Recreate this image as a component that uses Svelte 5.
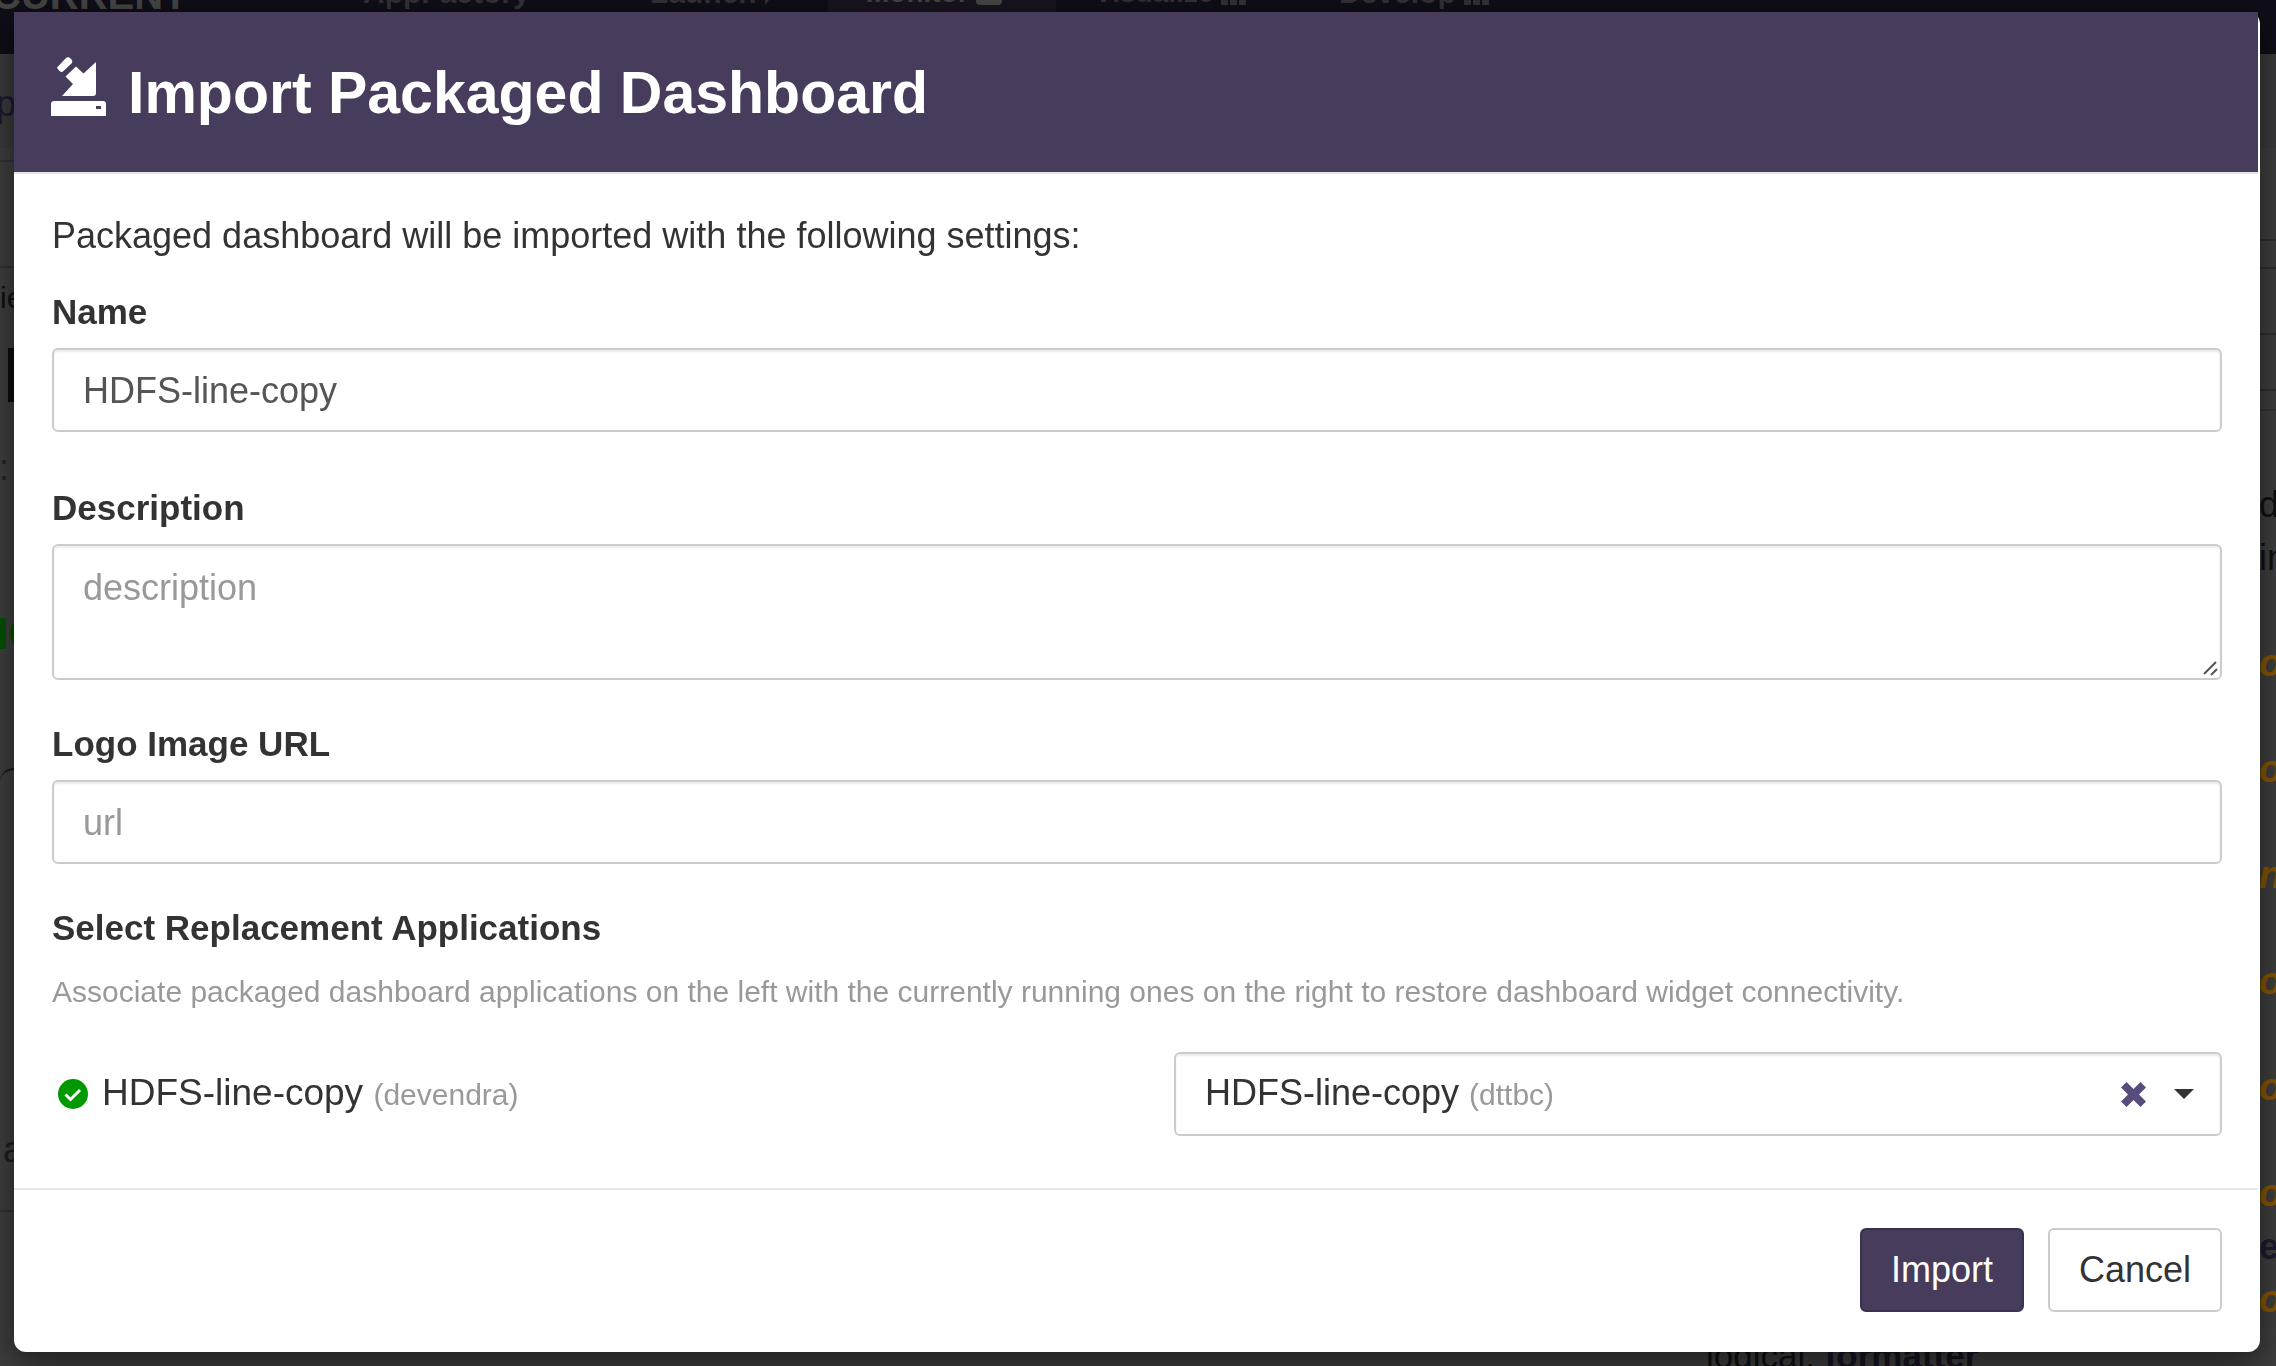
<script>
  let name = $state('HDFS-line-copy');
  let description = $state('');
  let logoUrl = $state('');

  const running = [{ id: 'dttbc', name: 'HDFS-line-copy' }];
  let replacementId = $state('dttbc');
  let replacement = $derived(running.find((app) => app.id === replacementId));

  const rightLines = [
    { text: 'd' },
    { text: 'in' },
    { text: '' },
    { text: 'o', kind: 'key' },
    { text: '' },
    { text: 'o', kind: 'key' },
    { text: '' },
    { text: 'n', kind: 'key' },
    { text: '' },
    { text: 'o', kind: 'key' },
    { text: '' },
    { text: 'o', kind: 'key' },
    { text: '' },
    { text: 'o', kind: 'key' },
    { text: 'e', kind: 'type' },
    { text: 'o', kind: 'key' }
  ];
</script>

<div class="page" aria-hidden="true">
  <div class="nav">
    <span class="brand">CURRENT</span>
    <span class="tab app">AppFactory</span>
    <span class="tab launch">Launch <svg width="10" height="24" viewBox="0 0 10 24"><path d="M0 0v24L10 12z" /></svg></span>
    <span class="tab active">Monitor <svg width="26" height="24" viewBox="0 0 26 24"><path d="M0 0h26v20a4 4 0 0 1-4 4H4a4 4 0 0 1-4-4z" /></svg></span>
    <span class="tab visualize">Visualize <svg width="25" height="24" viewBox="0 0 25 24"><path d="M0 0h7v24H0zM9 0h7v24H9zM18 0h7v24h-7z" /></svg></span>
    <span class="tab develop">Develop <svg width="25" height="24" viewBox="0 0 25 24"><path d="M0 0h7v24H0zM9 0h7v24H9zM18 0h7v24h-7z" /></svg></span>
  </div>
  <div class="subbar"><span>p</span></div>
  <div class="content">
    <div class="left">
      <div class="rule first"></div>
      <div class="rule second"></div>
      <span class="crumb">ie</span>
      <span class="block"></span>
      <span class="colon">:</span>
      <span class="status">IC</span>
      <span class="panel"></span>
      <span class="foot">a</span>
      <div class="rule"></div>
    </div>
    <div class="right">
      <div class="grid-rules"></div>
      {#each rightLines as line}
        <div class="line {line.kind ?? ''}">{line.text}</div>
      {/each}
    </div>
  </div>
  <div class="tail">logical, <b>formatter</b></div>
</div>

<div class="backdrop">
  <div class="dialog" role="dialog" aria-modal="true" aria-labelledby="title">
    <header>
      <svg class="import-icon" viewBox="0 0 55 59" aria-hidden="true">
        <path d="M7 9.500 14.500 1.500Q17 -.8 19.500 1.500L20.500 2.500Q22 4.500 20.500 6.500L12.500 14Q10.500 16 8.500 14L6.500 11.500Q5.500 10.500 7 9.500z" />
        <path d="M14.500 19.500 25 9.500 32.500 16.500 45 5V36a3 3 0 0 1-3 3H11L22 27z" />
        <path fill-rule="evenodd" d="M3 44H52a3 3 0 0 1 3 3V59H0V47a3 3 0 0 1 3-3zM45 49v3h5v-3z" />
      </svg>
      <h1 id="title">Import Packaged Dashboard</h1>
    </header>

    <form id="import-form" onsubmit={(e) => e.preventDefault()}>
      <p class="intro">Packaged dashboard will be imported with the following settings:</p>

      <div class="group name">
        <label for="name">Name</label>
        <input id="name" type="text" bind:value={name} />
      </div>

      <div class="group">
        <label for="description">Description</label>
        <div class="area">
          <textarea id="description" placeholder="description" bind:value={description}></textarea>
          <svg class="grip" viewBox="0 0 16 16" aria-hidden="true"><path d="M2 14 14 2M9 15l6-6" /></svg>
        </div>
      </div>

      <div class="group">
        <label for="logo">Logo Image URL</label>
        <input id="logo" type="text" placeholder="url" bind:value={logoUrl} />
      </div>

      <h2>Select Replacement Applications</h2>
      <p class="help">Associate packaged dashboard applications on the left with the currently running ones on the right to restore dashboard widget connectivity.</p>

      <div class="mapping">
        <label class="source" for="replacement">
          <svg class="check" viewBox="0 0 30 30" aria-hidden="true">
            <circle cx="15" cy="15" r="15" />
            <path d="M7.500 15.500 12.500 20.500 22 11" />
          </svg>
          <span>HDFS-line-copy <small>(devendra)</small></span>
        </label>
        <div class="picker">
          <select id="replacement" bind:value={replacementId}>
            {#each running as app}
              <option value={app.id}>{app.name}</option>
            {/each}
          </select>
          <div class="chosen">
            <span class="value">
              {#if replacement}{replacement.name} <small>({replacement.id})</small>{/if}
            </span>
            <button type="button" class="clear" aria-label="Clear selection" onclick={() => (replacementId = '')}>
              <svg viewBox="0 0 25 25" aria-hidden="true"><path d="M5.500 0 12.500 7 19.500 0 25 5.500 18 12.500 25 19.500 19.500 25 12.500 18 5.500 25 0 19.500 7 12.500 0 5.500z" /></svg>
            </button>
            <svg class="caret" viewBox="0 0 20 10" aria-hidden="true"><path d="M0 0h20L10 10z" /></svg>
          </div>
        </div>
      </div>
    </form>

    <footer>
      <button type="submit" form="import-form" class="btn primary">Import</button>
      <button type="button" class="btn">Cancel</button>
    </footer>
  </div>
</div>

<style>
  :global(body) {
    background: #3b3b3b;
  }

  .page,
  .backdrop {
    font-family: 'Helvetica Neue', 'Liberation Sans', Arial, sans-serif;
    font-size: 36px;
    line-height: 52px;
    color: #333;
  }

  /* Dimmed page behind the dialog */
  .page {
    position: fixed;
    inset: 0;
    overflow: hidden;
    background: #3d3d3d;
    color: #0f0f0f;
  }
  .nav {
    display: flex;
    height: 54px;
    background: #0f0d16;
    color: #313034;
    font-size: 30px;
    font-weight: bold;
    line-height: 24px;
  }
  .nav span {
    flex: none;
    box-sizing: border-box;
    white-space: nowrap;
    margin-top: -19px;
  }
  .nav svg {
    fill: currentColor;
    vertical-align: bottom;
  }
  .nav .brand {
    width: 371px;
    margin-left: -8px;
    margin-top: -17px;
    font-size: 40px;
    color: #444;
  }
  .nav .app { width: 287px; }
  .nav .launch { width: 178px; }
  .nav .active {
    width: 228px;
    height: 73px;
    padding-left: 38px;
    background: #18131d;
    color: #444;
    font-size: 28px;
  }
  .nav .visualize { width: 283px; padding-left: 38px; font-size: 28px; }
  .subbar {
    height: 94px;
    background: #393939;
    color: #1b1830;
  }
  .subbar span {
    display: block;
    margin-left: -4px;
    padding-top: 24px;
  }
  .content {
    display: flex;
    justify-content: space-between;
  }
  .left {
    display: flex;
    flex-direction: column;
    width: 14px;
    overflow: hidden;
  }
  .rule {
    height: 2px;
    background: #313131;
  }
  .first { margin-top: 12px; }
  .second { margin-top: 104px; }
  .crumb {
    margin-top: 4px;
    font-size: 30px;
  }
  .block {
    height: 54px;
    margin: 24px 0 0 8px;
    background: #0b0b0b;
  }
  .colon { margin: 40px 0 0 -1px; color: #232323; }
  .status {
    margin: 114px 0 0 -4px;
    font-size: 44px;
    color: #005000;
    font-weight: bold;
    white-space: nowrap;
  }
  .panel {
    height: 288px;
    margin-top: 108px;
    border-top: 2px solid #161616;
    border-radius: 14px 0 0 0;
  }
  .foot { margin: 66px 0 34px 3px; color: #1c1c1c; }
  .right {
    width: 17px;
    line-height: 53px;
  }
  .grid-rules {
    height: 330px;
    background:
      linear-gradient(#2d2d2d, #2d2d2d) 0 91px / 100% 2px no-repeat,
      linear-gradient(#2d2d2d, #2d2d2d) 0 119px / 100% 2px no-repeat,
      linear-gradient(#2d2d2d, #2d2d2d) 0 185px / 100% 2px no-repeat,
      linear-gradient(#2d2d2d, #2d2d2d) 0 241px / 100% 2px no-repeat,
      linear-gradient(#333, #333) 0 261px / 100% 2px no-repeat;
  }
  .line { height: 53px; }
  .key {
    color: #855300;
    font-size: 38px;
    font-style: italic;
    font-weight: bold;
  }
  .type {
    color: #1f1a30;
    font-weight: bold;
  }
  .tail {
    padding-left: 1706px;
    margin-top: 3px;
    font-size: 35px;
    line-height: 53px;
  }
  .tail b { color: #16131f; }

  /* Dialog */
  .backdrop {
    position: relative;
    padding: 12px 16px 14px 14px;
  }
  .dialog {
    border-radius: 0 12px 12px 12px;
    background: #fff;
    box-shadow: 0 10px 30px rgba(0, 0, 0, 0.5);
  }
  header {
    display: flex;
    align-items: center;
    gap: 22px;
    height: 160px;
    margin-right: 2px;
    padding: 0 37px;
    border-bottom: 2px solid #e5e5e5;
    background: #473c5c;
    background-clip: padding-box;
    color: #fff;
  }
  .import-icon {
    width: 55px;
    height: 59px;
    margin-bottom: 12px;
    fill: #fff;
  }
  h1 {
    margin: 2px 0 0;
    font-size: 59px;
    line-height: 64px;
    font-weight: bold;
  }
  form {
    padding: 36px 38px 52px;
  }
  p {
    margin: 0;
  }
  .intro {
    margin-bottom: 24px;
  }
  .group {
    margin-bottom: 38px;
  }
  .name {
    margin-bottom: 50px;
  }
  .group label,
  h2 {
    display: block;
    margin: 0 0 10px;
    font-size: 35px;
    line-height: 52px;
    font-weight: bold;
  }
  input,
  textarea,
  select {
    display: block;
    box-sizing: border-box;
    width: 100%;
    height: 84px;
    margin: 0;
    padding: 2px 29px 0;
    border: 2px solid #ccc;
    border-radius: 6px;
    background: #fff;
    box-shadow: inset 0 2px 2px rgba(0, 0, 0, 0.075);
    color: #555;
    font: inherit;
  }
  textarea {
    height: 136px;
    padding: 16px 29px;
    line-height: 52px;
    resize: vertical;
  }
  textarea::-webkit-resizer {
    display: none;
  }
  ::placeholder {
    color: #999;
    opacity: 1;
  }
  .area {
    position: relative;
  }
  .grip {
    position: absolute;
    right: 4px;
    bottom: 4px;
    width: 16px;
    height: 16px;
    fill: none;
    stroke: #555;
    stroke-width: 2;
    pointer-events: none;
  }
  .help {
    padding-top: 2px;
    margin-bottom: 34px;
    color: #999;
    font-size: 30px;
    line-height: 52px;
  }
  small {
    color: #999;
    font-size: 30px;
  }
  .mapping {
    display: grid;
    grid-template-columns: 1122fr 1048fr;
    align-items: center;
  }
  .source {
    display: flex;
    align-items: center;
    gap: 14px;
    padding-left: 6px;
    font-size: 37px;
  }
  .check {
    width: 30px;
    height: 30px;
    fill: #090;
  }
  .check path {
    fill: none;
    stroke: #fff;
    stroke-width: 3;
  }
  .picker {
    display: grid;
  }
  .picker select,
  .chosen {
    grid-area: 1 / 1;
  }
  .picker select {
    appearance: none;
    color: transparent;
  }
  .picker option {
    color: #333;
  }
  .chosen {
    position: relative;
    display: flex;
    align-items: center;
    padding: 0 28px 0 31px;
    pointer-events: none;
  }
  .value {
    flex: 1;
  }
  .clear {
    display: flex;
    margin: 0 28px 0 0;
    padding: 0;
    border: 0;
    background: none;
    pointer-events: auto;
    cursor: pointer;
  }
  .clear svg {
    width: 25px;
    height: 25px;
    fill: #5a4c7a;
  }
  .caret {
    width: 20px;
    height: 10px;
    fill: #333;
  }
  footer {
    display: flex;
    justify-content: flex-end;
    gap: 24px;
    margin-right: 2px;
    padding: 38px 36px 40px;
    border-top: 2px solid #e5e5e5;
  }
  .btn {
    height: 84px;
    padding: 0 29px;
    border: 2px solid #ccc;
    border-radius: 6px;
    background: #fff;
    color: #333;
    font: inherit;
    cursor: pointer;
  }
  .primary {
    border-color: #3b324d;
    background: #473c5c;
    color: #fff;
  }
</style>
